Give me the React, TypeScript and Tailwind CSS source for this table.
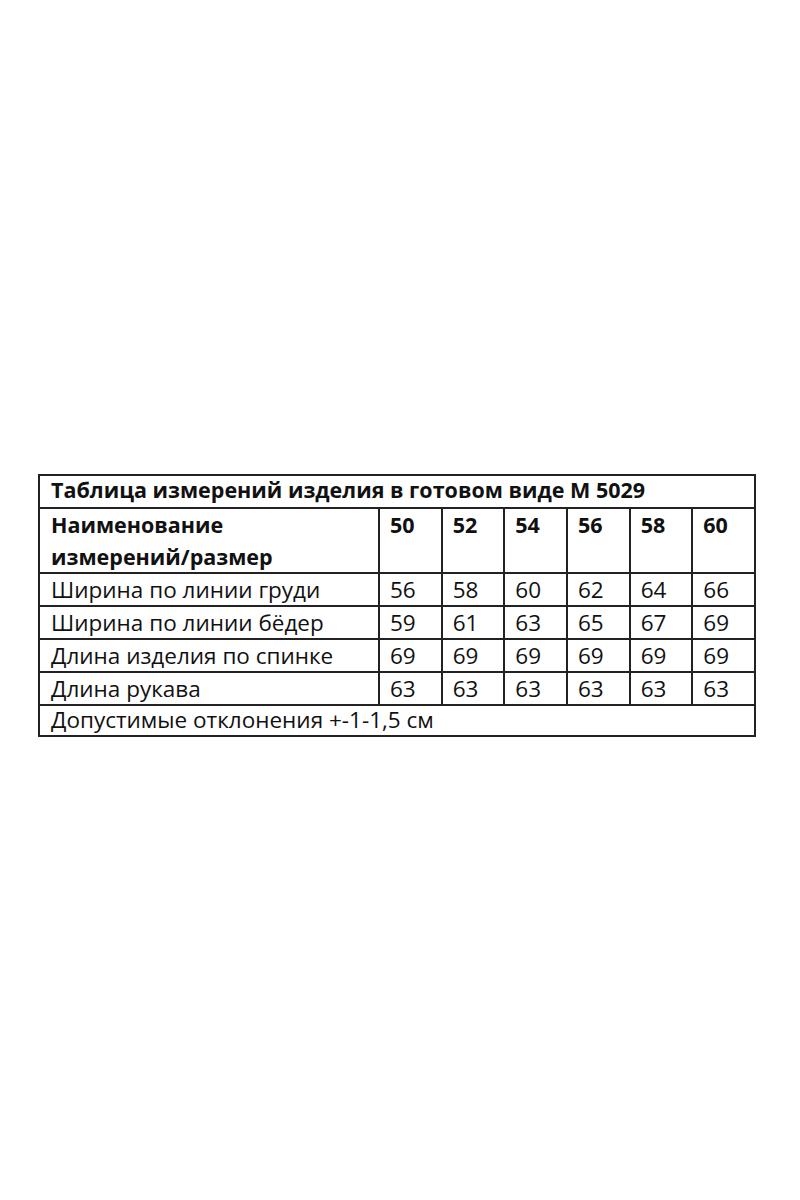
import React from "react";

const sizes = ["50", "52", "54", "56", "58", "60"];

const rows: { name: string; values: string[] }[] = [
    { name: "Ширина по линии груди", values: ["56", "58", "60", "62", "64", "66"] },
    { name: "Ширина по линии бёдер", values: ["59", "61", "63", "65", "67", "69"] },
    { name: "Длина изделия по спинке", values: ["69", "69", "69", "69", "69", "69"] },
    { name: "Длина рукава", values: ["63", "63", "63", "63", "63", "63"] },
];

function App() {
    return (
        <div className="min-h-[1200px] w-[800px] bg-white pt-[474px] pl-[38px] text-[#111]"
            style={{ fontFamily: '"Open Sans", "Liberation Sans", sans-serif' }}>
            <div className="w-[718px] border-l-2 border-t-2 border-[#222] text-[22.5px]">
                {/* title */}
                <div className="h-[33px] border-r-2 border-b-2 border-[#222] pl-[11px] text-[21.5px] leading-[27px] font-bold">
                    Таблица измерений изделия в готовом виде М 5029
                </div>

                {/* header */}
                <div className="grid grid-cols-[340px_repeat(6,1fr)] text-[21.5px] font-bold leading-[32px]">
                    <div className="h-[65px] border-r-2 border-b-2 border-[#222] pl-[11px]">
                        Наименование<br />измерений/размер
                    </div>
                    {sizes.map((s) => (
                        <div key={s} className="h-[65px] border-r-2 border-b-2 border-[#222] pl-[10px]">
                            {s}
                        </div>
                    ))}
                </div>

                {rows.map((r) => (
                    <div key={r.name} className="grid grid-cols-[340px_repeat(6,1fr)] leading-[31px]">
                        <div className="h-[33px] border-r-2 border-b-2 border-[#222] pl-[11px]">
                            {r.name}
                        </div>
                        {r.values.map((v, i) => (
                            <div key={i} className="h-[33px] border-r-2 border-b-2 border-[#222] pl-[10px]">
                                {v}
                            </div>
                        ))}
                    </div>
                ))}

                <div className="h-[31px] border-r-2 border-b-2 border-[#222] pl-[11px] leading-[28px]">
                    Допустимые отклонения +-1-1,5 см
                </div>
            </div>
        </div>
    );
}

export default App
